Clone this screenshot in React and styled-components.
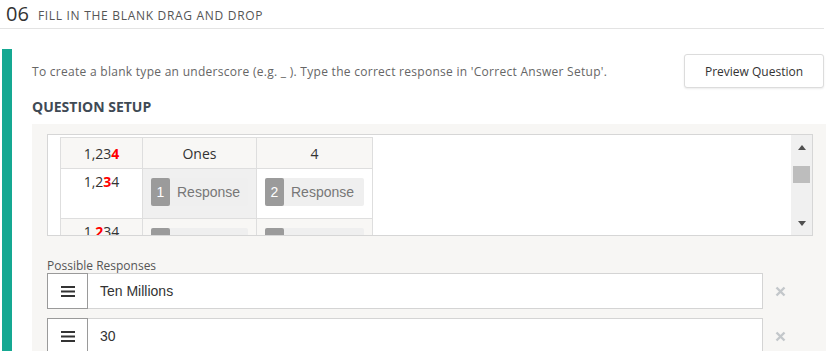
import styled, { createGlobalStyle } from 'styled-components'

const GlobalStyle = createGlobalStyle`
  body {
    margin: 0;
    background: #fff;
    font-family: 'Open Sans', 'Liberation Sans', sans-serif;
    overflow: hidden;
  }
`

const rows = [
  { num: ['1,23', '4', ''], place: 'Ones', value: '4', tone: 'head' },
  { num: ['1,2', '3', '4'], chips: [1, 2], tone: 'body' },
  { num: ['1,', '2', '34'], chips: [3, 4], tone: 'head' },
]

const responses = ['Ten Millions', '30']

export default function App() {
  return (
    <>
      <GlobalStyle />
      <Header>
        <Number>06</Number>
        <Title>FILL IN THE BLANK DRAG AND DROP</Title>
      </Header>
      <Section>
        <TopRow>
          <Hint>
            To create a blank type an underscore (e.g. _ ). Type the correct response in 'Correct Answer Setup'.
          </Hint>
          <PreviewButton>Preview Question</PreviewButton>
        </TopRow>
        <SectionTitle>QUESTION SETUP</SectionTitle>
        <Panel>
          <Editor>
            <TableArea>
              <Table>
                <tbody>
                  {rows.map((row, i) => (
                    <tr key={i}>
                      <Cell $tone={row.tone} $top={!!row.chips}>
                        {row.num[0]}
                        <Red>{row.num[1]}</Red>
                        {row.num[2]}
                      </Cell>
                      {row.chips ? (
                        row.chips.map((c, j) => (
                          <Cell key={c} $tone={j === 0 ? 'head' : row.tone} $gray={i === 1 && j === 0}>
                            <Chip>
                              <ChipNum>{c}</ChipNum>
                              <ChipText>Response</ChipText>
                            </Chip>
                          </Cell>
                        ))
                      ) : (
                        <>
                          <Cell $tone={row.tone}>{row.place}</Cell>
                          <Cell $tone={row.tone}>{row.value}</Cell>
                        </>
                      )}
                    </tr>
                  ))}
                </tbody>
              </Table>
            </TableArea>
            <Scrollbar>
              <Arrow $up />
              <Thumb />
              <Spacer />
              <Arrow />
            </Scrollbar>
          </Editor>
          <Label>Possible Responses</Label>
          {responses.map((r) => (
            <ResponseRow key={r}>
              <ResponseBox>
                <Handle>
                  <svg width="14" height="11" viewBox="0 0 14 11">
                    <rect x="0" y="0" width="14" height="2" fill="#333" />
                    <rect x="0" y="4.5" width="14" height="2" fill="#333" />
                    <rect x="0" y="9" width="14" height="2" fill="#333" />
                  </svg>
                </Handle>
                <ResponseText>{r}</ResponseText>
              </ResponseBox>
              <Remove>
                <svg width="11" height="11" viewBox="0 0 11 11">
                  <path d="M1.5 1.5 L9.5 9.5 M9.5 1.5 L1.5 9.5" stroke="#c3c7ca" strokeWidth="2.4" />
                </svg>
              </Remove>
            </ResponseRow>
          ))}
        </Panel>
      </Section>
    </>
  )
}

const Header = styled.div`
  height: 28px;
  margin-right: 2px;
  padding-left: 6px;
  display: flex;
  align-items: center;
  gap: 9px;
  border-bottom: 1px solid #e3e3e3;
`

const Number = styled.span`
  font-size: 20px;
  color: #333;
  line-height: 1;
`

const Title = styled.span`
  font-size: 12px;
  letter-spacing: 0.7px;
  color: #555;
  padding-top: 3px;
`

const Section = styled.div`
  margin: 20px 0 0 2px;
  border-left: 10px solid #15a892;
  padding: 5px 0 0 20px;
  height: 310px;
`

const TopRow = styled.div`
  display: flex;
  align-items: center;
  justify-content: space-between;
  padding-right: 2px;
`

const Hint = styled.span`
  font-size: 12px;
  letter-spacing: 0.28px;
  color: #666;
`

const PreviewButton = styled.button`
  width: 140px;
  height: 34px;
  background: #fff;
  border: 1px solid #dcdcdc;
  border-radius: 3px;
  box-shadow: 0 1px 2px rgba(0, 0, 0, 0.08);
  font-family: 'Open Sans', 'Liberation Sans', sans-serif;
  font-size: 12px;
  color: #333;
`

const SectionTitle = styled.div`
  margin-top: 9px;
  font-size: 14px;
  font-weight: 700;
  color: #3f4a55;
`

const Panel = styled.div`
  margin-top: 8px;
  background: #f7f6f4;
  padding: 10px 13px 0 15px;
  height: 230px;
`

const Editor = styled.div`
  height: 100px;
  border: 1px solid #d6d6d6;
  background: #fff;
  display: flex;
  overflow: hidden;
`

const TableArea = styled.div`
  flex: 1;
  padding: 2px 0 0 12px;
  overflow: hidden;
`

const Table = styled.table`
  border-collapse: collapse;
  font-family: 'Open Sans', 'Liberation Sans', sans-serif;
  font-size: 14px;
  color: #333;
  border-top: 1px solid #d6d6d6;

  tr:nth-child(1) td { height: 30px; }
  tr:nth-child(2) td { height: 46px; }
  tr:nth-child(3) td { height: 46px; }
`

const Cell = styled.td`
  border: 1px solid #dedede;
  padding: 0 8px;
  text-align: center;
  vertical-align: ${(p) => (p.$top ? 'top' : 'middle')};
  padding-top: ${(p) => (p.$top ? '3px' : '0')};
  background: ${(p) => (p.$gray ? '#f0f0f0' : p.$tone === 'head' ? '#f8f7f5' : '#fff')};

  &:nth-child(1) { width: 65px; }
  &:nth-child(2) { width: 97px; }
  &:nth-child(3) { width: 99px; }
`

const Red = styled.b`
  color: #f00;
`

const Chip = styled.div`
  display: flex;
  align-items: stretch;
  height: 28px;
  background: #efefef;
  border-radius: 2px;
  margin-top: -3px;
  font-family: 'Liberation Sans', Arial, sans-serif;
`

const ChipNum = styled.span`
  width: 19px;
  background: #9b9b9b;
  color: #fff;
  border-radius: 2px;
  display: flex;
  align-items: center;
  justify-content: center;
  font-size: 14px;
`

const ChipText = styled.span`
  padding: 0 5px 0 7px;
  display: flex;
  align-items: center;
  color: #777;
  font-size: 14px;
`

const Scrollbar = styled.div`
  width: 21px;
  background: #f0f0f0;
  display: flex;
  flex-direction: column;
  align-items: center;
  padding: 10px 0 9px;
  box-sizing: border-box;
`

const Arrow = styled.div`
  width: 0;
  height: 0;
  border-left: 4.5px solid transparent;
  border-right: 4.5px solid transparent;
  ${(p) => (p.$up ? 'border-bottom: 5px solid #505050;' : 'border-top: 5px solid #505050;')}
`

const Thumb = styled.div`
  width: 17px;
  height: 17px;
  background: #bdbdbd;
  margin-top: 16px;
`

const Spacer = styled.div`
  flex: 1;
`

const Label = styled.div`
  margin-top: 22px;
  font-size: 12px;
  color: #555;
  line-height: 15px;
`

const ResponseRow = styled.div`
  display: flex;
  align-items: center;
  margin-bottom: 9px;
`

const ResponseBox = styled.div`
  width: 716px;
  height: 36px;
  box-sizing: border-box;
  border: 1px solid #d4d4d4;
  background: #fff;
  display: flex;
`

const Handle = styled.div`
  width: 39px;
  margin: -1px 0 -1px -1px;
  border: 1px solid #9a9a9a;
  display: flex;
  align-items: center;
  justify-content: center;
  flex-shrink: 0;
`

const ResponseText = styled.span`
  font-family: 'Liberation Sans', Arial, sans-serif;
  font-size: 14px;
  color: #333;
  display: flex;
  align-items: center;
  padding-left: 12px;
`

const Remove = styled.div`
  margin-left: 12px;
  display: flex;
  align-items: center;
`
